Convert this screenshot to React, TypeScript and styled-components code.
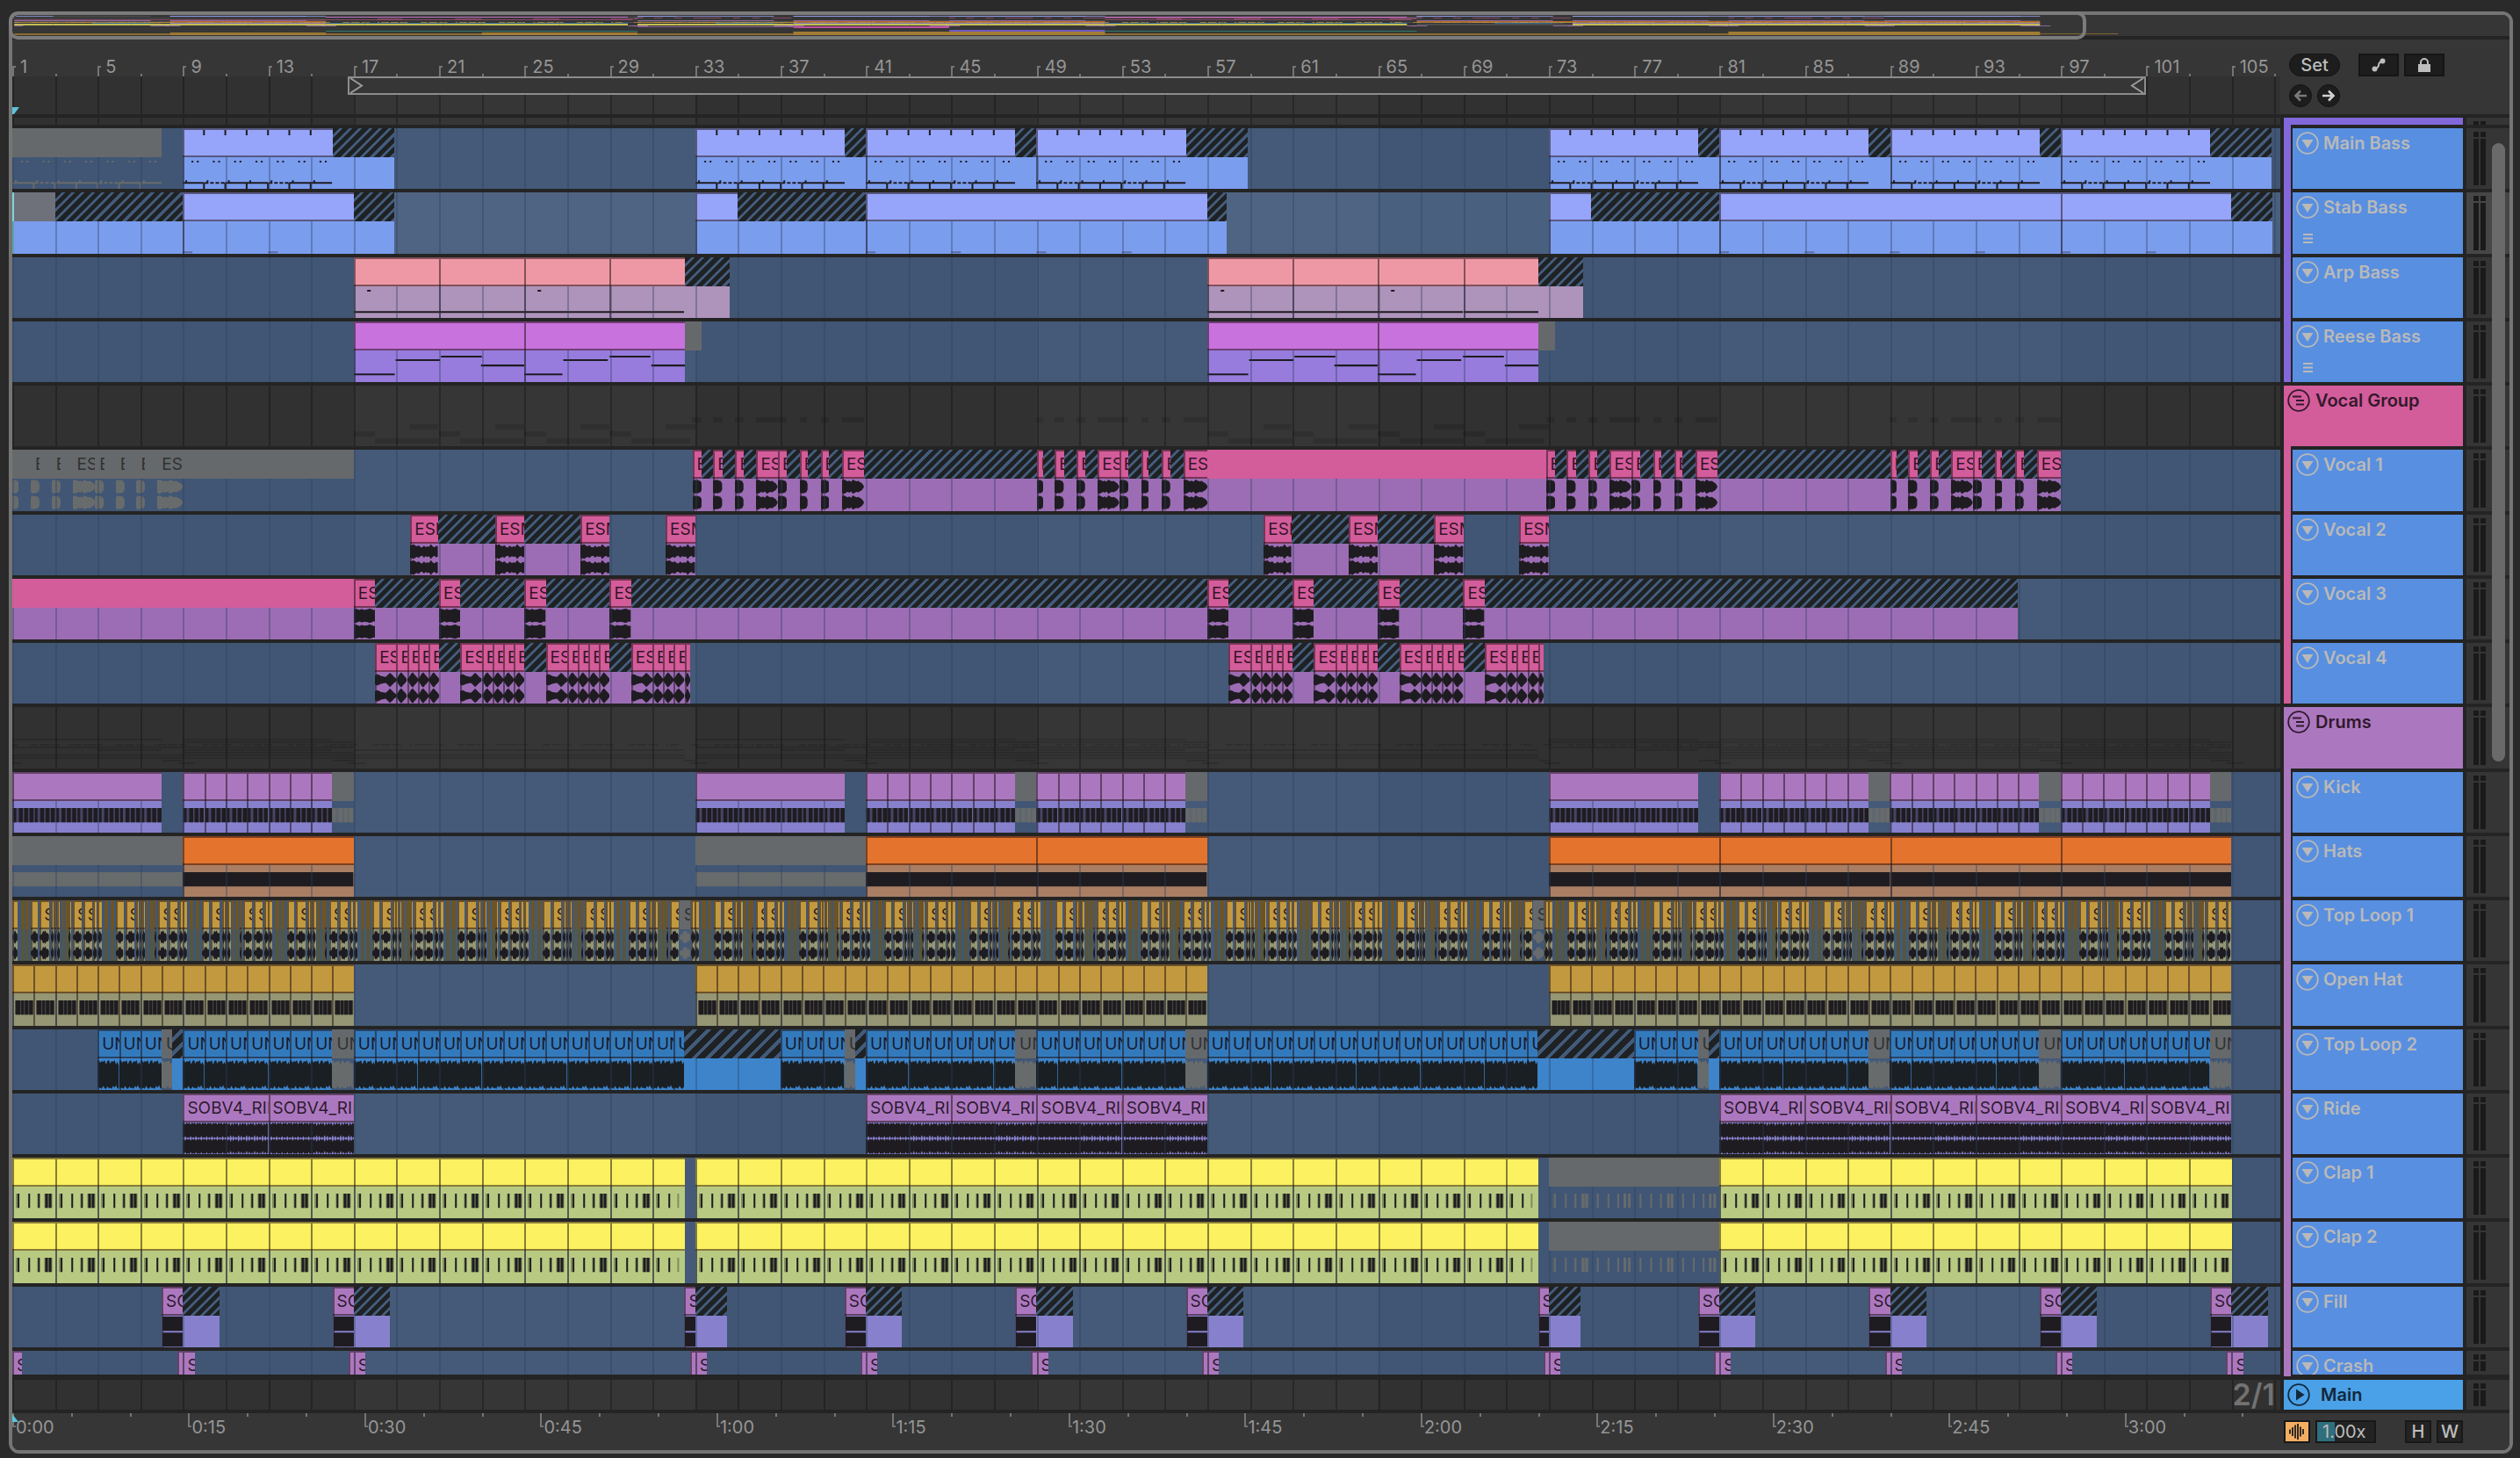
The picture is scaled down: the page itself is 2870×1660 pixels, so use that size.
import React from "react";
import styled, { createGlobalStyle, css } from "styled-components";

/* ---------- timeline scale ---------- */
const START = 1;
const END = 107.29;
const SPAN = END - START;
const MAP_START = 0.9;
const MAP_SPAN = 128.2;

type Kind = "clip" | "plain" | "hatch" | "mute" | "dim" | "ghost" | "cursor" | "gap";
type Wave =
  | "bass" | "stab" | "arp" | "arpTail" | "reese" | "reeseTail"
  | "short" | "long" | "v2" | "v3" | "v4" | "v4half"
  | "kick" | "hats" | "openhat" | "loop" | "loop2" | "ride" | "clap" | "fill";

interface Seg { s: number; e: number; k: Kind; w?: Wave; t?: string; }

interface Track {
  name: string;
  head: string;
  body: string;
  segs: Seg[];
  group?: boolean;
  strip: string;
  last?: boolean;
  selected?: boolean;
  list?: boolean;
  wideHatch?: boolean;
  children?: Track[];
  mapY?: number;
}

const clip = (s: number, e: number, w?: Wave, t?: string): Seg => ({ s, e, k: "clip", w, t });
const seg = (k: Kind, s: number, e: number, w?: Wave, t?: string): Seg => ({ s, e, k, w, t });
const every = (s: number, e: number, step: number, w?: Wave, t?: string): Seg[] => {
  const out: Seg[] = [];
  for (let b = s; b < e - 0.01; b += step) out.push(clip(b, Math.min(b + step, e), w, t));
  return out;
};
const shift = (list: Seg[], by: number) => list.map((x) => ({ ...x, s: x.s + by, e: x.e + by }));
const twice = (list: Seg[]) => [...list, ...shift(list, 40)];

/* ---------- arrangement ---------- */
const mainBass: Seg[] = [
  seg("mute", START, 8, "bass"),
  clip(9, 16, "bass"), seg("hatch", 16, 18.9),
  clip(33, 40, "bass"), seg("hatch", 40, 41), clip(41, 48, "bass"), seg("hatch", 48, 49),
  clip(49, 56, "bass"), seg("hatch", 56, 58.9),
  clip(73, 80, "bass"), seg("hatch", 80, 81), clip(81, 88, "bass"), seg("hatch", 88, 89),
  clip(89, 96, "bass"), seg("hatch", 96, 97), clip(97, 104, "bass"), seg("hatch", 104, 106.9),
];
const stabBass: Seg[] = [
  seg("cursor", START, 1.1), seg("dim", 1.1, 3), seg("hatch", 3, 9),
  clip(9, 17, "stab"), seg("hatch", 17, 18.9),
  clip(33, 35), seg("hatch", 35, 41), clip(41, 57, "stab"), seg("hatch", 57, 57.9),
  clip(73, 75), seg("hatch", 75, 81), clip(81, 97, "stab"), clip(97, 105, "stab"),
  seg("hatch", 105, 106.9),
];
const arpBass = twice([
  clip(17, 21, "arp"), clip(21, 25, "arpTail"), clip(25, 29, "arp"), clip(29, 32.5, "arpTail"),
  seg("hatch", 32.5, 34.6),
]);
const reeseBass = twice([clip(17, 25, "reese"), clip(25, 32.5, "reeseTail"), seg("mute", 32.5, 33.3)]);

const chops = (base: number, first: number, last: number): Seg[] => [
  clip(base + first, base + 0.3, "short", "ESM"), seg("hatch", base + 0.3, base + 0.85),
  clip(base + 0.85, base + 1.28, "short", "ESM"), seg("hatch", base + 1.28, base + 1.88),
  clip(base + 1.88, base + 2.28, "short", "ESM"), seg("hatch", base + 2.28, base + 2.87),
  clip(base + 2.87, base + 3.88, "long", "ESM"),
  clip(base + 3.88, base + 4.3, "short", "ESM"), seg("hatch", base + 4.3, base + 4.9),
  clip(base + 4.9, base + 5.26, "short", "ESM"), seg("hatch", base + 5.26, base + 5.88),
  clip(base + 5.88, base + 6.28, "short", "ESM"), seg("hatch", base + 6.28, base + 6.88),
  clip(base + 6.88, base + last, "long", "ESM"),
];
const vocal1: Seg[] = [
  seg("mute", START, 1.3, "short"), seg("mute", 1.3, 1.86),
  seg("mute", 1.86, 2.27, "short", "ESM"), seg("mute", 2.27, 2.84),
  seg("mute", 2.84, 3.25, "short", "ESM"), seg("mute", 3.25, 3.82),
  seg("mute", 3.82, 4.88, "long", "ESM"), seg("mute", 4.88, 5.3, "short", "ESM"),
  seg("mute", 5.3, 5.84), seg("mute", 5.84, 6.25, "short", "ESM"), seg("mute", 6.25, 6.82),
  seg("mute", 6.82, 7.23, "short", "ESM"), seg("mute", 7.23, 7.8),
  seg("mute", 7.8, 9, "long", "ESM"), seg("mute", 9, 17),
  ...chops(33, -0.13, 7.9), seg("hatch", 40.9, 49), ...chops(49, 0, 8),
  seg("plain", 57, 72.87),
  ...chops(73, -0.13, 7.9), seg("hatch", 80.9, 89), ...chops(89, 0, 8),
];
const vocal2 = twice([
  clip(19.65, 20.95, "v2", "ESM"), seg("hatch", 20.95, 23.63),
  clip(23.63, 25, "v2", "ESM"), seg("hatch", 25, 27.63),
  clip(27.63, 29, "v2", "ESM"), clip(31.62, 33, "v2", "ESM"),
]);
const v3hits = (end: number): Seg[] => [
  clip(17, 18, "v3", "ESM"), seg("hatch", 18, 21), clip(21, 22, "v3", "ESM"), seg("hatch", 22, 25),
  clip(25, 26, "v3", "ESM"), seg("hatch", 26, 29), clip(29, 30, "v3", "ESM"), seg("hatch", 30, end),
];
const vocal3: Seg[] = [seg("plain", START, 17), ...v3hits(57), ...shift(v3hits(55), 40)];
const v4bars = [18, 22, 26, 30];
const vocal4 = twice(
  v4bars.flatMap((b) => {
    const tail = b === 30 ? 32.75 : b + 3;
    return [
      clip(b, b + 1, "v4", "ESM"),
      ...every(b + 1, tail, 0.5, "v4half", "ESM"),
      ...(b === 30 ? [] : [seg("hatch", b + 3, b + 4)]),
    ];
  })
);
const kickRun = (b: number): Seg[] => [...every(b, b + 7, 1, "kick"), seg("mute", b + 7, b + 8, "kick")];
const kick: Seg[] = [
  clip(1, 8, "kick"), ...kickRun(9), clip(33, 40, "kick"), ...kickRun(41), ...kickRun(49),
  clip(73, 80, "kick"), ...kickRun(81), ...kickRun(89), ...kickRun(97),
];
const hats: Seg[] = [
  seg("mute", START, 9, "hats"), clip(9, 17, "hats"), seg("mute", 33, 41, "hats"),
  ...every(41, 57, 8, "hats"), ...every(73, 105, 8, "hats"),
];
const loopCell: Seg[] = [
  clip(0, 0.34, "loop"), clip(0.42, 0.86, "loop", "SO"), clip(0.95, 1.07, "loop"),
  clip(1.09, 1.18, "loop"), clip(1.22, 1.36, "loop"), seg("ghost", 1.42, 1.52),
  seg("ghost", 1.6, 1.76), clip(1.78, 1.88, "loop"), clip(1.97, 2.37, "loop", "SO"),
  clip(2.45, 2.86, "loop", "SO"), clip(2.93, 3.1, "loop"), clip(3.12, 3.32, "loop"),
  seg("ghost", 3.45, 3.62), seg("ghost", 3.72, 3.9),
];
const topLoop1: Seg[] = [
  clip(START, 1.24, "loop"), seg("ghost", 1.4, 1.56), seg("ghost", 1.62, 1.8),
  ...Array.from({ length: 26 }, (_, i) => shift(loopCell, 1.87 + i * 4)).flat(),
]
  .filter((x) => x.e < 105 && !(x.e > 32.26 && x.s < 32.75) && !(x.e > 72.26 && x.s < 72.75))
  .concat([seg("mute", 32.26, 32.75, "loop", "S"), seg("mute", 72.26, 72.75, "loop", "S")])
  .sort((a, b) => a.s - b.s);
const openHat: Seg[] = [
  ...every(1, 17, 1, "openhat"), ...every(33, 57, 1, "openhat"), ...every(73, 105, 1, "openhat"),
];
const unRun = (b: number): Seg[] => [
  ...every(b, b + 7, 1, "loop2", "UN"), seg("mute", b + 7, b + 8, "loop2", "UN"),
];
const unIntro = (b: number): Seg[] => [
  ...every(b, b + 3, 1, "loop2", "UN"), seg("mute", b + 3, b + 3.5, "loop2", "UN"),
  seg("hatch", b + 3.5, b + 4),
];
const topLoop2: Seg[] = [
  ...unIntro(5), ...unRun(9), ...every(17, 32.5, 1, "loop2", "UN"), seg("hatch", 32.5, 37),
  ...unIntro(37), ...unRun(41), ...unRun(49), ...every(57, 72.5, 1, "loop2", "UN"),
  seg("hatch", 72.5, 77), ...unIntro(77), ...unRun(81), ...unRun(89), ...unRun(97),
];
const RIDE = "SOBV4_RIDE";
const ride: Seg[] = [
  ...every(9, 17, 4, "ride", RIDE), ...every(41, 57, 4, "ride", RIDE), ...every(81, 105, 4, "ride", RIDE),
];
const clap: Seg[] = [
  ...every(1, 32.5, 2, "clap"), ...every(33, 72.5, 2, "clap"), seg("mute", 73, 81, "clap"),
  ...every(81, 105, 2, "clap"),
];
const fill: Seg[] = [9, 17, 33, 41, 49, 57, 73, 81, 89, 97, 105].flatMap((b) => [
  clip(b === 33 || b === 73 ? b - 0.5 : b - 1, b, "fill", "SOB"),
  seg("hatch", b, b === 33 || b === 73 ? b + 1.5 : b + 1.7),
]);
const crash: Seg[] = [
  clip(1, 1.46, undefined, "S"),
  ...[9, 17, 33, 41, 49, 57, 73, 81, 89, 97, 105].flatMap((b) => [
    clip(b - 0.25, b), clip(b, b + 0.54, undefined, "S"),
  ]),
];

const PURPLE = "#8268da";
const PINK = "#d35c9b";
const LILAC = "#ab78c0";

const bassTracks: Track[] = [
  { name: "Main Bass", head: "#96a5f9", body: "#7b9dee", segs: mainBass, strip: PURPLE, mapY: 1 },
  { name: "Stab Bass", head: "#96a5f9", body: "#7b9dee", segs: stabBass, strip: PURPLE, selected: true, list: true, mapY: 1 },
  { name: "Arp Bass", head: "#ef98a5", body: "#ae93ba", segs: arpBass, strip: PURPLE, mapY: 2 },
  { name: "Reese Bass", head: "#c872de", body: "#977cdd", segs: reeseBass, strip: PURPLE, list: true, last: true, mapY: 2 },
];
const vocalTracks: Track[] = [
  { name: "Vocal 1", head: PINK, body: "#9c6db5", segs: vocal1, strip: PINK, mapY: 3 },
  { name: "Vocal 2", head: PINK, body: "#9c6db5", segs: vocal2, strip: PINK, mapY: 4 },
  { name: "Vocal 3", head: PINK, body: "#9c6db5", segs: vocal3, strip: PINK, mapY: 5 },
  { name: "Vocal 4", head: PINK, body: "#9c6db5", segs: vocal4, strip: PINK, last: true, mapY: 5 },
];
const drumTracks: Track[] = [
  { name: "Kick", head: LILAC, body: "#8781cd", segs: kick, strip: LILAC, mapY: 6 },
  { name: "Hats", head: "#e4742d", body: "#a97e63", segs: hats, strip: LILAC, mapY: 7 },
  { name: "Top Loop 1", head: "#c2993f", body: "#959673", segs: topLoop1, strip: LILAC, mapY: 8 },
  { name: "Open Hat", head: "#c2993f", body: "#959673", segs: openHat, strip: LILAC, mapY: 8 },
  { name: "Top Loop 2", head: "#337abc", body: "#3d84cb", segs: topLoop2, strip: LILAC, wideHatch: true, mapY: 9 },
  { name: "Ride", head: LILAC, body: "#8781cd", segs: ride, strip: LILAC, mapY: 9 },
  { name: "Clap 1", head: "#fbf161", body: "#b8ca82", segs: clap, strip: LILAC, mapY: 10 },
  { name: "Clap 2", head: "#fbf161", body: "#b8ca82", segs: clap, strip: LILAC, mapY: 11 },
  { name: "Fill", head: LILAC, body: "#8781cd", segs: fill, strip: LILAC, mapY: 12 },
  { name: "Crash", head: LILAC, body: "#8781cd", segs: crash, strip: LILAC, last: true, mapY: 12 },
];
const rows: Track[] = [
  ...bassTracks,
  { name: "Vocal Group", head: PINK, body: PINK, segs: [], group: true, strip: PINK, children: vocalTracks },
  ...vocalTracks,
  { name: "Drums", head: LILAC, body: LILAC, segs: [], group: true, strip: LILAC, children: drumTracks },
  ...drumTracks,
];

/* ---------- note and waveform drawings, 24 units a bar, 36 high ---------- */
const box = (x: number, y: number, w: number, h: number) => `M${x} ${y}h${w}v${h}h${-w}z`;

const stereo = (env: number[], w: number) => {
  const step = w / (env.length - 1);
  return [9, 27]
    .map((c) => {
      const up = env.map((v, i) => `${(i * step).toFixed(1)} ${(c - v * 8.5).toFixed(1)}`);
      const down = env.map((v, i) => `${(i * step).toFixed(1)} ${(c + v * 8.5).toFixed(1)}`).reverse();
      return `M${up.join("L")}L${down.join("L")}z`;
    })
    .join("");
};

const envelopes: Partial<Record<Wave, number[]>> = {
  short: [0.7, 0.95, 0.85, 0.9, 0.8, 0.75, 0.4],
  long: [0.8, 0.95, 0.85, 0.7, 0.8, 0.65, 0.95, 0.8, 0.7, 0.75, 0.6, 0.45, 0.1],
  v2: [0.9, 0.85, 1, 0.8, 0.7, 0.85, 0.6, 0.55, 0.8, 0.6, 0.7, 0.65, 1, 0.7, 0.55, 0.75, 0.7],
  v3: [0.9, 0.95, 0.85, 0.75, 0.9, 0.8, 0.8, 0.85, 0.95, 0.9, 0.75, 0.8],
  v4: [0.6, 0.75, 0.65, 0.5, 0.45, 0.4, 0.65, 0.95, 0.7, 0.4, 0.2],
  v4half: [0.1, 0.4, 0.8, 1, 0.7, 0.45, 0.15],
  loop: [0.15, 0.4, 0.35, 0.85, 0.7, 0.9, 0.5, 0.6, 0.3],
};

function drawWave(w: Wave, len: number): { d: string; soft?: string; faint?: string } {
  const width = len * 24;
  const env = envelopes[w];
  if (env) return { d: stereo(env, width) };
  let d = "";
  switch (w) {
    case "bass":
      for (let b = 0; b < len; b++) {
        const x = b * 24;
        d += box(x + 10, 4, 2, 2) + box(x + 16, 4, 2, 2);
        if (b % 3 === 1) for (let i = 0; i < 4; i++) d += box(x + 1 + i * 6, 28, 4, 2);
        else d += box(x, 28, 24, 2);
        d += box(x + 3, 26, 2, 3);
        if (b > 0) d += box(x - 1, 29, 2, 7);
      }
      return { d };
    case "stab":
      for (let b = 0; b < len; b += 4) d += box(b * 24, 34, 11, 2);
      return { d: "", faint: d };
    case "arp":
      return { d: box(0, 28, width, 2) + box(15, 4, 4, 2) };
    case "arpTail":
      return { d: box(0, 28, width, 2) };
    case "reese":
      return { d: box(0, 26, 46, 2) + box(47, 10, 50, 2) + box(98, 6, 46, 2) + box(143, 16, 49, 2) };
    case "reeseTail":
      return { d: box(0, 26, 43, 2) + box(44, 10, 50, 2) + box(96, 6, 46, 2) + box(143, 16, 40, 2) };
    case "kick":
      for (let i = 0; i < len * 4; i++) d += box(i * 6 + 1.4, 8, i % 4 === 0 ? 3 : 4.4, 16);
      return { d, soft: box(0, 8, width, 16) };
    case "hats":
      return { d: box(0, 8, width, 16) };
    case "openhat":
      return {
        d: box(4, 8, 5, 16) + box(10, 8, 3, 16) + box(14, 8, 4, 16) + box(19, 8, 4, 16),
        soft: box(3, 8, 21, 16),
      };
    case "clap":
      for (let b = 0; b < len; b += 2) {
        const x = b * 24;
        const alt = (b / 2) % 2;
        d += box(x + 6, 8, 2, 16);
        if (b + 1 < len + 1) d += box(x + 18, 8, 2, 16);
        if (len > 1.6) d += box(x + 29, 8, 2, 16) + box(x + 37 - alt, 8, 3, 16) + box(x + 41, 8, 3, 16);
      }
      return { d, faint: box(4, 8, 2, 16) + box(28, 8, 2, 16) + (len > 1.6 ? box(36, 8, 9, 16) : "") };
    case "loop2": {
      const top = [3, 2, 5, 3, 4, 2, 7, 3, 2, 6, 3, 4, 2, 7, 4, 8];
      const n = Math.max(4, Math.round(16 * len));
      const pts = Array.from({ length: n }, (_, i) => `${((i * width) / (n - 1)).toFixed(1)} ${top[i % 16]}`);
      const low = Array.from({ length: n }, (_, i) => `${((i * width) / (n - 1)).toFixed(1)} ${36 - top[(i + 2) % 16] / 1.4}`);
      return { d: `M${pts.join("L")}L${low.reverse().join("L")}z` };
    }
    case "ride": {
      const ride = Array.from({ length: 65 }, (_, i) =>
        i % 2 ? 1.05 : i > 34 ? [0.6, 0.8, 0.7][i % 3] : [0.88, 0.76][(i / 2) % 2]
      );
      return { d: stereo(ride, width) };
    }
    case "fill":
      return { d: box(1, 1, width, 16) + box(1, 19, width, 16) };
    default:
      return { d };
  }
}

/* ---------- styled parts ---------- */
const Global = createGlobalStyle`
  *, *::before, *::after { box-sizing: border-box; }
  body { margin: 0; background: #2a2a2a; }
  button, input { font: inherit; color: inherit; margin: 0; padding: 0; }
`;

const Page = styled.main`
  height: 100vh;
  padding: 13px 8px 5px 10px;
  background: #2a2a2a;
  color: #b9b9b9;
  font-family: Inter, "Liberation Sans", sans-serif;
  font-size: 20px;
  line-height: 22px;
  display: flex;
`;
const Frame = styled.section`
  flex: 1;
  min-width: 0;
  display: flex;
  flex-direction: column;
  border: 4px solid #757575;
  border-radius: 12px;
  background: #242424;
`;
const MapStrip = styled.div`
  position: relative;
  height: 28px;
  padding-bottom: 4px;
  border-radius: 8px 8px 0 0;
`;
const MapDrawing = styled.svg`
  display: block;
  width: 100%;
  height: 24px;
  background: #363636;
  border-radius: 8px 8px 0 0;
`;
const MapWindow = styled.div`
  position: absolute;
  left: -4px;
  top: -4px;
  bottom: 0;
  border: 4px solid #7c7c7c;
  border-radius: 10px;
`;
const Columns = styled.div`
  display: grid;
  grid-template-columns: minmax(0, 1fr) 204px 49px;
  column-gap: 4px;
`;
const TopBar = styled(Columns)`
  background: #363636;
  margin-bottom: 4px;
`;
const RulerRow = styled.div`
  display: flex;
  height: 42px;
  align-items: flex-end;
  color: #959595;
  overflow: hidden;
`;
const Slot = styled.div`
  flex: 1 0 0px;
  min-width: 0;
`;
const BarSlot = styled(Slot)`
  display: flex;
  align-items: flex-end;
  gap: 5px;
  white-space: nowrap;
`;
const BarTick = styled.i<{ $major: boolean }>`
  flex: none;
  width: ${(p) => (p.$major ? 4 : 2)}px;
  height: ${(p) => (p.$major ? 12 : 3)}px;
  border-left: 2px solid #757575;
  ${(p) => p.$major && css`border-top: 2px solid #757575;`}
`;
const Scrub = styled.div`
  position: relative;
  height: 43px;
  display: flex;
  flex-direction: column;
  justify-content: space-between;
`;
const LoopRow = styled.div`
  position: relative;
  z-index: 3;
  display: flex;
  height: 21px;
`;
const LoopBrace = styled(Slot)`
  display: flex;
  justify-content: space-between;
  border: 2px solid #8c8c8c;
  background: #363636;
`;
const StartMark = styled.svg`
  position: relative;
  z-index: 3;
  display: block;
`;
const Controls = styled.div`
  grid-column: 2 / 4;
  padding: 16px 0 0 6px;
  display: flex;
  gap: 21px;
`;
const ControlStack = styled.div`
  display: flex;
  flex-direction: column;
  gap: 9px;
`;
const ControlRow = styled.div`
  display: flex;
  gap: 6px;
`;
const Pill = styled.button<{ $round?: boolean }>`
  width: ${(p) => (p.$round ? 26 : 58)}px;
  height: 26px;
  border: 1px solid #121212;
  border-radius: 13px;
  background: #1d1d1d;
  color: #bdbdbd;
  font-weight: 500;
  line-height: 22px;
  display: grid;
  place-items: center;
`;
const ToolButton = styled(Pill)`
  width: 46px;
  border-radius: 0;
  border: 2px solid #151515;
`;
const Tracks = styled.div`
  position: relative;
  flex: 1;
  min-height: 0;
  display: grid;
  grid-template-rows: 12px repeat(19, minmax(0, 1fr)) 33px;
  overflow: hidden;
`;
const LaneBox = styled.div<{ $end?: number }>`
  position: relative;
  overflow: hidden;
  margin-bottom: ${(p) => p.$end ?? 4}px;
  display: flex;
`;
const Shades = styled.div`
  position: absolute;
  inset: 0;
  display: flex;
`;
const Shade = styled(Slot)<{ $tone: string }>`
  background: ${(p) => p.$tone};
`;
const Lines = styled(Shades)`
  z-index: 1;
  pointer-events: none;
`;
const Line = styled(Slot)<{ $ink: string }>`
  box-shadow: inset 2px 0 ${(p) => p.$ink};
`;
const ClipRow = styled.div`
  position: relative;
  flex: 1;
  min-width: 0;
  display: flex;
`;
const Piece = styled(Slot)`
  display: flex;
  flex-direction: column;
  overflow: hidden;
`;
const EDGE = "rgba(30, 18, 20, 0.52)";
const Head = styled.div<{ $k: Kind; $c: string; $wide?: boolean }>`
  position: relative;
  z-index: 2;
  flex: none;
  height: 33px;
  padding-left: 5px;
  overflow: hidden;
  white-space: nowrap;
  font-size: 19px;
  line-height: 34px;
  color: rgba(20, 8, 16, 0.85);
  ${(p) => p.$k === "clip" && css`
    background: ${p.$c};
    box-shadow: inset 2px 2px ${EDGE}, inset 0 -2px ${EDGE};
  `}
  ${(p) => p.$k === "plain" && css`background: ${p.$c};`}
  ${(p) => p.$k === "mute" && css`background: #66696b; color: #303232;`}
  ${(p) => p.$k === "dim" && css`background: #6e717a;`}
  ${(p) => p.$k === "ghost" && css`background: #6b5426;`}
  ${(p) => p.$k === "cursor" && css`background: #7ad6dc;`}
  ${(p) => p.$k === "hatch" && css`
    background: repeating-linear-gradient(
      135deg,
      #1f2224 0 ${p.$wide ? 7 : 5}px,
      #435b7a ${p.$wide ? 7 : 5}px ${p.$wide ? 11 : 8}px
    );
  `}
`;
const Body = styled.div<{ $k: Kind; $c: string }>`
  flex: 1;
  min-height: 0;
  display: flex;
  ${(p) => (p.$k === "clip" || p.$k === "plain" || p.$k === "hatch" || p.$k === "dim") && css`background: ${p.$c};`}
  ${(p) => p.$k === "clip" && css`box-shadow: inset 2px 0 ${EDGE};`}
  ${(p) => p.$k === "ghost" && css`background: #55563f;`}
  ${(p) => p.$k === "cursor" && css`background: #7ad6dc;`}
`;
const WaveDrawing = styled.svg`
  display: block;
  width: 100%;
  height: 100%;
`;
const HeadTicks = styled.svg`
  position: absolute;
  left: 0;
  top: 2px;
  width: 100%;
  height: 6px;
`;
const Digest = styled.div<{ $thin: boolean }>`
  position: relative;
  flex: 1;
  min-width: 0;
  padding-top: 36px;
  display: flex;
  flex-direction: column;
  gap: ${(p) => (p.$thin ? 1 : 2)}px;
`;
const DigestRow = styled.div<{ $thin: boolean }>`
  display: flex;
  flex: none;
  height: ${(p) => (p.$thin ? 2 : 6)}px;
`;
const DigestBit = styled(Slot)<{ $on: boolean }>`
  background: ${(p) => (p.$on ? "rgba(0,0,0,0.13)" : "transparent")};
`;

const HeaderCell = styled.div`
  display: flex;
  gap: 2px;
  min-height: 0;
`;
const GroupCell = styled.div`
  display: flex;
  flex-direction: column;
  min-height: 0;
`;
const Strip = styled.div<{ $c: string; $last?: boolean }>`
  width: 8px;
  flex: none;
  background: ${(p) => p.$c};
  margin-bottom: ${(p) => (p.$last ? 4 : 0)}px;
`;
const StripTail = styled.div<{ $c: string }>`
  width: 8px;
  height: 4px;
  flex: none;
  background: ${(p) => p.$c};
`;
const Title = styled.div<{ $c: string; $ink: string; $end: number; $gap: number }>`
  flex: 1;
  min-width: 0;
  min-height: 0;
  overflow: hidden;
  margin-bottom: ${(p) => p.$end}px;
  padding: 4px;
  background: ${(p) => p.$c};
  color: ${(p) => p.$ink};
  font-weight: 600;
  display: grid;
  grid-template-columns: 26px 1fr;
  column-gap: ${(p) => p.$gap}px;
  row-gap: 17px;
  align-content: start;
  line-height: 26px;
`;
const Fold = styled.button`
  width: 26px;
  height: 26px;
  border: 0;
  background: none;
  display: block;
`;
const TakeLanes = styled.svg`
  justify-self: center;
`;
const FoldDrawing = styled.svg`
  display: block;
`;
const MeterCell = styled.div<{ $lit?: boolean; $end?: number }>`
  margin-bottom: ${(p) => p.$end ?? 4}px;
  padding: 4px 8px;
  background: ${(p) => (p.$lit ? "#464646" : "#353535")};
  display: flex;
  gap: 2px;
  overflow: hidden;
`;
const Meter = styled.div`
  width: 6px;
  display: flex;
  flex-direction: column;
  gap: 2px;
  &::before {
    content: "";
    height: 6px;
    flex: none;
    background: #1a1a1a;
  }
  &::after {
    content: "";
    flex: 1;
    background: #1a1a1a;
  }
`;
const ScrollThumb = styled.div`
  position: absolute;
  right: 5px;
  top: 2%;
  height: 49%;
  width: 15px;
  border-radius: 8px;
  background: #6a6a6a;
  z-index: 4;
`;
const PartialCap = styled.div`
  height: 8px;
  background: ${PURPLE};
`;
const MainRow = styled(Columns)`
  height: 34px;
  margin-bottom: 4px;
`;
const Zoomed = styled.span`
  position: relative;
  z-index: 2;
  margin-left: auto;
  padding-right: 6px;
  font-size: 34px;
  line-height: 34px;
  font-weight: 600;
  color: #727272;
`;
const BottomBar = styled(Columns)`
  height: 42px;
  background: #363636;
  border-radius: 0 0 8px 8px;
`;
const TimeRow = styled.div`
  display: flex;
  color: #959595;
  overflow: hidden;
`;
const TimeSlot = styled(Slot)`
  display: flex;
  align-items: flex-start;
  white-space: nowrap;
`;
const TimeTick = styled.i<{ $major: boolean }>`
  flex: none;
  width: ${(p) => (p.$major ? 4 : 2)}px;
  height: ${(p) => (p.$major ? 16 : 4)}px;
  border-left: 2px solid #757575;
  ${(p) => p.$major && css`border-bottom: 2px solid #757575;`}
`;
const TimeLabel = styled.span`
  padding-top: 5px;
`;
const TimeMark = styled.svg`
  position: absolute;
`;
const BottomTools = styled.div`
  display: flex;
  gap: 6px;
  padding-top: 8px;
`;
const SquareButton = styled.button<{ $on?: boolean }>`
  width: 30px;
  height: 26px;
  border: 2px solid #181818;
  background: ${(p) => (p.$on ? "#f4ae62" : "#232323")};
  color: #bdbdbd;
  line-height: 20px;
  font-weight: 500;
  display: grid;
  place-items: center;
`;
const Speed = styled.input`
  width: 69px;
  height: 26px;
  margin-right: auto;
  padding-left: 6px;
  border: 2px solid #181818;
  background: linear-gradient(90deg, #2f6f7e 20px, #232323 20px);
  color: #bdbdbd;
`;

/* ---------- components ---------- */
const grow = (n: number) => ({ flexGrow: n });

const lineCells = Array.from({ length: 54 }, (_, i) => 1 + i * 2).concat(END);
const shadeCells = [START, 17, 33, 49, 65, 81, 97, END];

function GridLayer({ dark, light, ink }: { dark: string; light: string; ink: string }) {
  return (
    <>
      <Shades>
        {shadeCells.slice(1).map((e, i) => (
          <Shade key={e} $tone={i % 2 ? light : dark} style={grow(e - shadeCells[i])} />
        ))}
      </Shades>
      <Lines>
        {lineCells.slice(1).map((e, i) => (
          <Line key={e} $ink={ink} style={grow(e - lineCells[i])} />
        ))}
      </Lines>
    </>
  );
}

const GrayGrid = () => <GridLayer dark="#313131" light="#363636" ink="rgba(0,0,0,0.26)" />;

function WaveView({ seg: s }: { seg: Seg }) {
  const len = s.e - s.s;
  const { d, soft, faint } = drawWave(s.w!, len);
  const muted = s.k === "mute";
  const ink = muted ? "#686b6c" : s.w === "loop2" ? "#1a1f23" : "#1e1c20";
  return (
    <WaveDrawing viewBox={`0 0 ${len * 24} 36`} preserveAspectRatio="none" aria-hidden="true">
      {soft && <path d={soft} fill={ink} opacity={muted ? 0.7 : 0.6} />}
      {faint && <path d={faint} fill={ink} opacity={0.35} />}
      {d && <path d={d} fill={ink} />}
    </WaveDrawing>
  );
}

function fillGaps(segs: Seg[], from = START, to = END): Seg[] {
  const out: Seg[] = [];
  let at = from;
  for (const x of segs) {
    if (x.s > at + 0.001) out.push(seg("gap", at, x.s));
    out.push({ ...x, s: Math.max(x.s, at) });
    at = x.e;
  }
  if (at < to) out.push(seg("gap", at, to));
  return out;
}

function Clips({ track }: { track: Track }) {
  return (
    <ClipRow>
      {fillGaps(track.segs).map((x, i) =>
        x.k === "gap" ? (
          <Slot key={i} style={grow(x.e - x.s)} />
        ) : (
          <Piece key={i} style={grow(x.e - x.s)}>
            <Head $k={x.k} $c={track.head} $wide={track.wideHatch}>
              {x.t}
              {x.w === "bass" && x.k === "clip" && (
                <HeadTicks viewBox="0 0 168 6" preserveAspectRatio="none" aria-hidden="true">
                  <path d={[1, 2, 3, 4, 5, 6].map((b) => box(b * 24 - 1, 0, 2, 6)).join("")} fill="#1e1c20" />
                </HeadTicks>
              )}
            </Head>
            <Body $k={x.k} $c={track.body}>{x.w && <WaveView seg={x} />}</Body>
          </Piece>
        )
      )}
    </ClipRow>
  );
}

function GroupDigest({ tracks }: { tracks: Track[] }) {
  const thin = tracks.length > 6;
  return (
    <Digest $thin={thin}>
      {tracks.map((t) => (
        <DigestRow key={t.name} $thin={thin}>
          {fillGaps(t.segs.filter((x) => x.k === "clip")).map((x, i) => (
            <DigestBit key={i} $on={x.k !== "gap"} style={grow(x.e - x.s)} />
          ))}
        </DigestRow>
      ))}
    </Digest>
  );
}

function FoldIcon({ kind }: { kind: "track" | "group" | "main" }) {
  return (
    <FoldDrawing width="26" height="26" viewBox="0 0 26 26" aria-hidden="true">
      <circle cx="13" cy="13" r="11.8" fill="none" stroke="currentColor" strokeWidth="1.8" />
      {kind === "track" && <path d="M6.500 9h13L13 19z" fill="currentColor" />}
      {kind === "main" && <path d="M10 6.500v13L19.500 13z" fill="currentColor" />}
      {kind === "group" && (
        <path d="M6 8.500h10M10 13h9M10 17.500h9" stroke="currentColor" strokeWidth="2" />
      )}
    </FoldDrawing>
  );
}

const Meters = ({ lit, end }: { lit?: boolean; end?: number }) => (
  <MeterCell $lit={lit} $end={end}>
    <Meter />
    <Meter />
  </MeterCell>
);

function TrackRow({ track }: { track: Track }) {
  const end = track.name === "Crash" ? 6 : 4;
  return (
    <Columns>
      <LaneBox $end={end}>
        {track.group ? (
          <>
            <GrayGrid />
            <GroupDigest tracks={track.children!} />
          </>
        ) : (
          <>
            <GridLayer
              dark={track.selected ? "#4a607f" : "#405674"}
              light={track.selected ? "#4e6482" : "#445a78"}
              ink="rgba(45,65,95,0.36)"
            />
            <Clips track={track} />
          </>
        )}
      </LaneBox>
      {track.group ? (
        <GroupCell>
          <Title $c={track.head} $ink="#32192b" $end={0} $gap={6}>
            <Fold aria-label={`Fold ${track.name}`}><FoldIcon kind="group" /></Fold>
            <span>{track.name}</span>
          </Title>
          <StripTail $c={track.strip} />
        </GroupCell>
      ) : (
        <HeaderCell>
          <Strip $c={track.strip} $last={track.last} />
          <Title $c="#588fe0" $ink="#b9b9b9" $end={end} $gap={5}>
            <Fold aria-label={`Unfold ${track.name}`}><FoldIcon kind="track" /></Fold>
            <span>{track.name}</span>
            {track.list && (
              <TakeLanes width="11" height="11" viewBox="0 0 11 11" aria-hidden="true">
                <path d="M0 1h11M0 5.500h11M0 10h11" stroke="currentColor" strokeWidth="2" />
              </TakeLanes>
            )}
          </Title>
        </HeaderCell>
      )}
      <Meters lit={track.selected} end={end} />
    </Columns>
  );
}

function Overview() {
  const tracks = [...bassTracks, ...vocalTracks, ...drumTracks];
  const extras: [number, number, number, number, string][] = [
    [33, 13, 8, 1, "#8a5f93"], [41, 13, 8, 2, "#c04f9e"], [49, 17, 8, 2, "#6b57c4"],
    [17, 18, 16, 1, "#2f7a70"], [57, 18, 16, 1, "#2f7a70"],
    [1, 21, 104, 2, "#8a6c30"], [9, 20, 8, 3, "#9c7832"], [25, 20, 8, 3, "#a17c34"],
    [41, 19, 16, 4, "#a17c34"], [89, 19, 16, 4, "#a17c34"], [105, 21, 4, 1, "#80652f"],
  ];
  return (
    <MapStrip>
      <MapDrawing viewBox={`${MAP_START} 0 ${MAP_SPAN} 24`} preserveAspectRatio="none" aria-label="Arrangement overview">
        {tracks.flatMap((t) =>
          t.segs
            .filter((x) => x.k !== "cursor" && x.k !== "hatch" && x.k !== "ghost")
            .map((x, i) => (
              <rect
                key={t.name + i}
                x={x.s}
                y={t.mapY}
                width={x.e - x.s}
                height={1}
                fill={x.k === "mute" ? "#555" : t.head}
                opacity={t.name.startsWith("Vocal") ? 0.5 : 0.72}
              />
            ))
        )}
        {extras.map(([x, y, w, h, c], i) => (
          <rect key={i} x={x} y={y} width={w} height={h} fill={c} />
        ))}
      </MapDrawing>
      <MapWindow style={{ width: `calc(${(SPAN / MAP_SPAN) * 100}% + 8px)` }} />
    </MapStrip>
  );
}

function BarRuler() {
  return (
    <RulerRow>
      {Array.from({ length: 54 }, (_, i) => {
        const bar = 1 + i * 2;
        const major = i % 2 === 0;
        return (
          <BarSlot key={bar} style={grow(Math.min(2, END - bar))}>
            <BarTick $major={major} />
            {major && <span>{bar}</span>}
          </BarSlot>
        );
      })}
    </RulerRow>
  );
}

function TimeRuler() {
  const step = 2.75;
  return (
    <TimeRow>
      <TimeMark width="7" height="10" viewBox="0 0 7 10" aria-hidden="true">
        <path d="M0 1L7 10H0z" fill="#5cc3d8" />
      </TimeMark>
      {Array.from({ length: 39 }, (_, i) => {
        const sec = i * 5;
        const major = i % 3 === 0;
        return (
          <TimeSlot key={i} style={grow(Math.min(step, END - 1 - i * step))}>
            <TimeTick $major={major} />
            {major && (
              <TimeLabel>{`${Math.floor(sec / 60)}:${String(sec % 60).padStart(2, "0")}`}</TimeLabel>
            )}
          </TimeSlot>
        );
      })}
    </TimeRow>
  );
}

const Arrow = ({ back }: { back?: boolean }) => (
  <svg width="16" height="16" viewBox="0 0 16 16" aria-hidden="true">
    <path
      d={back ? "M15 8H4M8 2.500L2.500 8L8 13.500" : "M1 8h11M8 2.500L13.500 8L8 13.500"}
      fill="none"
      stroke={back ? "#7a7a7a" : "#d0d0d0"}
      strokeWidth="2.6"
    />
  </svg>
);

export default function App() {
  return (
    <Page>
      <Global />
      <Frame>
        <Overview />
        <TopBar>
          <div>
            <BarRuler />
            <Scrub>
              <GrayGrid />
              <LoopRow>
                <Slot style={grow(16.75 - START)} />
                <LoopBrace style={grow(101 - 16.75)}>
                  <svg width="16" height="17" viewBox="0 0 16 17" aria-hidden="true">
                    <path d="M1 0L14 8.500L1 17" fill="none" stroke="#9a9a9a" strokeWidth="2" />
                  </svg>
                  <svg width="16" height="17" viewBox="0 0 16 17" aria-hidden="true">
                    <path d="M15 0L2 8.500L15 17" fill="none" stroke="#9a9a9a" strokeWidth="2" />
                  </svg>
                </LoopBrace>
                <Slot style={grow(END - 101)} />
              </LoopRow>
              <StartMark width="8" height="8" viewBox="0 0 8 8" aria-hidden="true">
                <path d="M0 0h8L2 8H0z" fill="#5cc3d8" />
              </StartMark>
            </Scrub>
          </div>
          <Controls>
            <ControlStack>
              <Pill>Set</Pill>
              <ControlRow>
                <Pill $round aria-label="Previous locator"><Arrow back /></Pill>
                <Pill $round aria-label="Next locator"><Arrow /></Pill>
              </ControlRow>
            </ControlStack>
            <ControlRow>
              <ToolButton aria-label="Automation mode">
                <svg width="16" height="16" viewBox="0 0 16 16" aria-hidden="true">
                  <path d="M3 13Q8 11 8 8T13 3" fill="none" stroke="#bdbdbd" strokeWidth="2" />
                  <circle cx="3.500" cy="12.500" r="3" fill="#bdbdbd" />
                  <circle cx="12.500" cy="3.500" r="3" fill="#bdbdbd" />
                </svg>
              </ToolButton>
              <ToolButton aria-label="Lock envelopes">
                <svg width="16" height="16" viewBox="0 0 16 16" aria-hidden="true">
                  <path d="M4 8V5a4 4 0 0 1 8 0v3" fill="none" stroke="#bdbdbd" strokeWidth="2" />
                  <rect x="1" y="7" width="14" height="9" fill="#bdbdbd" />
                </svg>
              </ToolButton>
            </ControlRow>
          </Controls>
        </TopBar>
        <Tracks>
          <Columns>
            <LaneBox><GrayGrid /></LaneBox>
            <GroupCell>
              <PartialCap />
              <StripTail $c={PURPLE} />
            </GroupCell>
            <Meters />
          </Columns>
          {rows.map((t) => (
            <TrackRow key={t.name} track={t} />
          ))}
          <ScrollThumb />
        </Tracks>
        <MainRow>
          <LaneBox $end={0}>
            <GrayGrid />
            <Zoomed>2/1</Zoomed>
          </LaneBox>
          <Title $c="#4aa1e8" $ink="#14283a" $end={0} $gap={12}>
            <Fold aria-label="Unfold Main"><FoldIcon kind="main" /></Fold>
            <span>Main</span>
          </Title>
          <Meters end={0} />
        </MainRow>
        <BottomBar>
          <TimeRuler />
          <BottomTools>
            <SquareButton $on aria-label="Show waveforms">
              <svg width="20" height="20" viewBox="0 0 20 20" aria-hidden="true">
                <path
                  d="M2 7.500v5M5 5v10M8 2.500v15M11 1v18M14 4.500v11M17 7v6"
                  stroke="#1d1d1d"
                  strokeWidth="1.8"
                />
              </svg>
            </SquareButton>
            <Speed aria-label="Playback speed" defaultValue="1.00x" />
            <SquareButton>H</SquareButton>
            <SquareButton>W</SquareButton>
          </BottomTools>
        </BottomBar>
      </Frame>
    </Page>
  );
}
